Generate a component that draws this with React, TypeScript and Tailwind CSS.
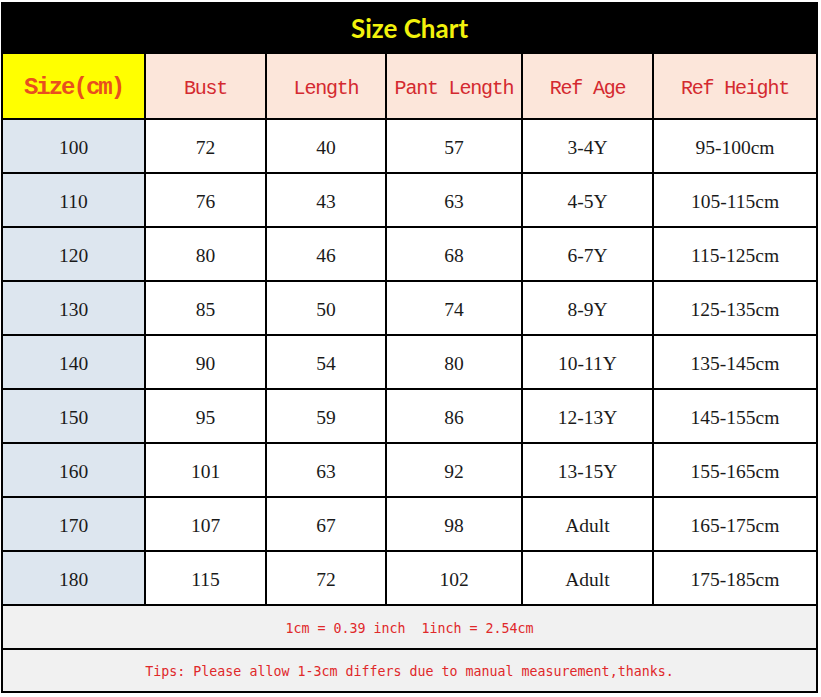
import React from 'react';

const ROWS: string[][] = [
  ['100', '72', '40', '57', '3-4Y', '95-100cm'],
  ['110', '76', '43', '63', '4-5Y', '105-115cm'],
  ['120', '80', '46', '68', '6-7Y', '115-125cm'],
  ['130', '85', '50', '74', '8-9Y', '125-135cm'],
  ['140', '90', '54', '80', '10-11Y', '135-145cm'],
  ['150', '95', '59', '86', '12-13Y', '145-155cm'],
  ['160', '101', '63', '92', '13-15Y', '155-165cm'],
  ['170', '107', '67', '98', 'Adult', '165-175cm'],
  ['180', '115', '72', '102', 'Adult', '175-185cm']
];

const HEADERS = ['Bust', 'Length', 'Pant Length', 'Ref Age', 'Ref Height'];

const App: React.FC = () => {
  return (
    <div className="min-h-[697px] w-[821px] bg-white pt-[2px] pl-[1px]">
      <div className="flex w-[817px] flex-col gap-[2px] bg-black px-[2px] pb-[2px]">
        <div className="-mb-[2px] flex h-[52px] items-center justify-center font-['Lato','Open_Sans',sans-serif] text-[26px] font-bold text-[#f2f20c]">
          Size Chart
        </div>

        <div className="grid grid-cols-[141px_119px_118px_134px_129px_162px] gap-[2px]">
          <div className="flex h-[64px] items-center justify-center bg-[#ffff00] pt-[4px] font-['Liberation_Mono',monospace] text-[24px] font-bold tracking-[-2px] text-[#e8501e]">
            Size(cm)
          </div>
          {HEADERS.map(h => (
            <div
              key={h}
              className="flex h-[64px] items-center justify-center whitespace-nowrap bg-[#fce6da] pt-[6px] font-['Liberation_Mono',monospace] text-[20px] tracking-[-1.2px] text-[#d42a30]"
            >
              {h}
            </div>
          ))}

          {ROWS.map(row =>
            row.map((cell, i) => (
              <div
                key={`${row[0]}-${i}`}
                className={`flex h-[52px] items-center justify-center pt-[3px] font-['Liberation_Serif',serif] text-[19.5px] text-[#1a1a1a] ${
                  i === 0 ? 'bg-[#dde6ef]' : 'bg-white'
                }`}
              >
                {cell}
              </div>
            ))
          )}
        </div>

        <div className="flex h-[42px] items-center justify-center whitespace-pre bg-[#f1f1f1] pt-[3px] font-['DejaVu_Sans_Mono',monospace] text-[13.3px] text-[#e0282a]">
          {'1cm = 0.39 inch  1inch = 2.54cm'}
        </div>
        <div className="flex h-[41px] items-center justify-center whitespace-pre bg-[#f1f1f1] pt-[3px] font-['DejaVu_Sans_Mono',monospace] text-[13.3px] text-[#e0282a]">
          Tips: Please allow 1-3cm differs due to manual measurement,thanks.
        </div>
      </div>
    </div>
  );
};

export default App;
